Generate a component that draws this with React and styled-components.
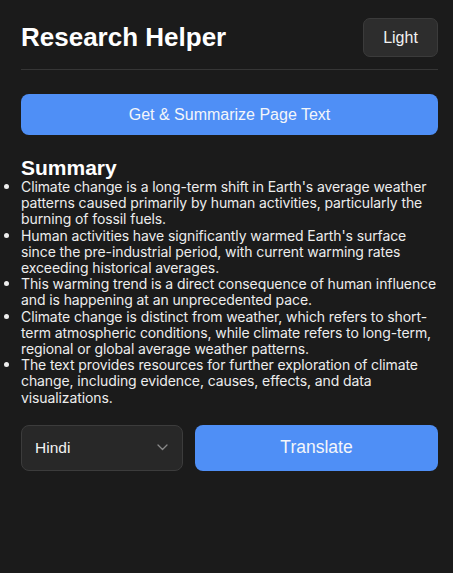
import React from "react";
import styled, { createGlobalStyle } from "styled-components";

const Global = createGlobalStyle`
  html, body { margin: 0; padding: 0; background: #1b1b1b; }
  body { font-family: "Liberation Sans", Arial, sans-serif; color: #f2f2f2; }
  * { box-sizing: border-box; }
`;

const Page = styled.div`
  min-height: 573px;
  background: #1b1b1b;
  padding: 18px 15px 0 21px;
  display: flex;
  flex-direction: column;
`;

const Header = styled.header`
  display: flex;
  align-items: center;
  justify-content: space-between;
  padding-bottom: 12px;
  border-bottom: 1px solid #363636;
`;

const Title = styled.h1`
  margin: 0;
  font-size: 26px;
  font-weight: 700;
  color: #ffffff;
  line-height: 30px;
  margin-top: -2px;
`;

const ThemeButton = styled.button`
  width: 75px;
  height: 39px;
  border-radius: 7px;
  border: 1px solid #3b3b3b;
  background: #2d2d2d;
  color: #f2f2f2;
  font-family: "Liberation Sans", Arial, sans-serif;
  font-size: 16px;
  padding: 0;
  cursor: pointer;
`;

const PrimaryButton = styled.button`
  height: ${(p) => p.$h}px;
  width: 100%;
  border: none;
  border-radius: 8px;
  background: #4f8ff6;
  color: #f4f6fa;
  font-family: "Liberation Sans", Arial, sans-serif;
  font-size: ${(p) => p.$fs}px;
  padding: 0;
  cursor: pointer;
`;

const Section = styled.section`
  margin-top: 24px;
  display: flex;
  flex-direction: column;
`;

const Heading = styled.h2`
  margin: 22px 0 0;
  font-size: 21px;
  font-weight: 700;
  line-height: 22px;
  color: #ffffff;
`;

const List = styled.ul`
  margin: 0;
  padding: 0;
  list-style: disc outside;
  font-family: Inter, "Liberation Sans", sans-serif;
  font-size: 14px;
  letter-spacing: -0.1px;
  line-height: 16.2px;
  color: #ededed;
`;

const Item = styled.li`
  padding: 0;
  &::marker { font-size: 15px; }
`;

const Controls = styled.div`
  margin-top: 19px;
  display: flex;
  gap: 12px;
`;

const SelectWrap = styled.div`
  position: relative;
  width: 162px;
  flex: none;
`;

const Select = styled.select`
  appearance: none;
  width: 100%;
  height: 46px;
  border-radius: 8px;
  border: 1px solid #3c3c3c;
  background: #282828;
  color: #f2f2f2;
  font-family: "Liberation Sans", Arial, sans-serif;
  font-size: 15.5px;
  padding: 0 0 0 13px;
  outline: none;
`;

const Chevron = styled.svg`
  position: absolute;
  right: 15px;
  top: 19px;
  pointer-events: none;
`;

const Translate = styled.div`
  flex: 1;
`;

const bullets = [
  "Climate change is a long-term shift in Earth's average weather patterns caused primarily by human activities, particularly the burning of fossil fuels.",
  "Human activities have significantly warmed Earth's surface since the pre-industrial period, with current warming rates exceeding historical averages.",
  "This warming trend is a direct consequence of human influence and is happening at an unprecedented pace.",
  "Climate change is distinct from weather, which refers to short-term atmospheric conditions, while climate refers to long-term, regional or global average weather patterns.",
  "The text provides resources for further exploration of climate change, including evidence, causes, effects, and data visualizations.",
];

export default function App() {
  return (
    <>
      <Global />
      <Page>
        <Header>
          <Title>Research Helper</Title>
          <ThemeButton>Light</ThemeButton>
        </Header>
        <Section>
          <PrimaryButton $h={41} $fs={16}>Get &amp; Summarize Page Text</PrimaryButton>
          <Heading>Summary</Heading>
          <List>
            {bullets.map((b, i) => (
              <Item key={i}>{b}</Item>
            ))}
          </List>
          <Controls>
            <SelectWrap>
              <Select defaultValue="hi">
                <option value="hi">Hindi</option>
                <option value="es">Spanish</option>
                <option value="fr">French</option>
              </Select>
              <Chevron width="11" height="7" viewBox="0 0 11 7" fill="none">
                <path d="M1 1l4.5 4.5L10 1" stroke="#8a8a8a" strokeWidth="1.3" strokeLinecap="round" strokeLinejoin="round" />
              </Chevron>
            </SelectWrap>
            <Translate>
              <PrimaryButton $h={46} $fs={17.5}>Translate</PrimaryButton>
            </Translate>
          </Controls>
        </Section>
      </Page>
    </>
  );
}
